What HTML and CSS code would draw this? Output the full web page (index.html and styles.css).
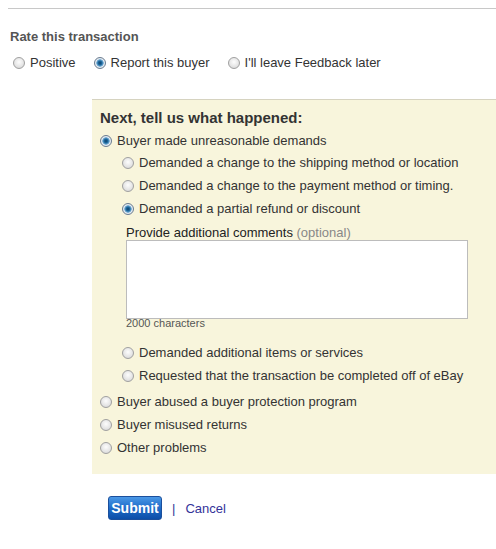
FILE: index.html
```html
<!DOCTYPE html>
<html lang="en">
<head>
  <meta charset="UTF-8">
  <title>Leave Feedback</title>
  <link rel="stylesheet" href="styles.css">
</head>
<body>
  <div class="rule"></div>

  <div class="rate">
    <h3>Rate this transaction</h3>
    <div class="rate-options">
      <label class="opt"><input type="radio" name="rate"> Positive</label>
      <label class="opt"><input type="radio" name="rate" checked> Report this buyer</label>
      <label class="opt"><input type="radio" name="rate"> I'll leave Feedback later</label>
    </div>
  </div>

  <div class="panel">
    <h2>Next, tell us what happened:</h2>
    <label class="opt row"><input type="radio" name="reason" checked> Buyer made unreasonable demands</label>
    <div class="sub">
      <label class="opt row"><input type="radio" name="demand"> Demanded a change to the shipping method or location</label>
      <label class="opt row"><input type="radio" name="demand"> Demanded a change to the payment method or timing.</label>
      <label class="opt row"><input type="radio" name="demand" checked> Demanded a partial refund or discount</label>
      <div class="comments">
        <div class="comments-label">Provide additional comments <span class="muted">(optional)</span></div>
        <textarea></textarea>
        <div class="count">2000 characters</div>
      </div>
      <label class="opt row"><input type="radio" name="demand"> Demanded additional items or services</label>
      <label class="opt row"><input type="radio" name="demand"> Requested that the transaction be completed off of eBay</label>
    </div>
    <label class="opt row"><input type="radio" name="reason"> Buyer abused a buyer protection program</label>
    <label class="opt row"><input type="radio" name="reason"> Buyer misused returns</label>
    <label class="opt row"><input type="radio" name="reason"> Other problems</label>
  </div>

  <div class="actions">
    <button class="submit">Submit</button>
    <span class="sep">|</span>
    <a href="#cancel" class="cancel">Cancel</a>
  </div>
</body>
</html>
```

FILE: styles.css
```css
body {
  font-family: "Liberation Sans", Arial, sans-serif;
  font-size: 13px;
  color: #333;
  margin: 0;
  background: #fff;
}

.rule {
  margin: 8px 0 0 8px;
  border-top: 1px solid #c8c8c8;
}

.rate {
  padding-left: 10px;
}

.rate h3 {
  margin: 20px 0 0;
  font-size: 13px;
  line-height: 16px;
  color: #555;
}

.rate-options {
  display: flex;
  gap: 18px;
  margin-top: 10px;
  padding-left: 3px;
}

.opt {
  display: flex;
  align-items: center;
  gap: 4px;
  line-height: 16px;
}

/* radio drawn by hand to look like the classic windows one */
.opt input {
  appearance: none;
  -webkit-appearance: none;
  margin: 0 1px 0 0;
  width: 12px;
  height: 12px;
  border-radius: 50%;
  border: 1px solid #a0a0a0;
  background: radial-gradient(circle at 50% 40%, #fdfdfd 0, #e4e4e4 60%, #cfcfcf 100%);
  flex: none;
}

.opt input:checked {
  border-color: #6a7c90;
  background: radial-gradient(circle, #0d3f68 0, #1d6aa0 2px, #7fb3d8 3.5px, #e8eef4 4px, #d4dbe2 100%);
}

.panel {
  margin: 28px 0 0 92px;
  background: #f8f5dc;
  border-top: 1px solid #d6d3c0;
  padding: 9px 8px 15px 8px;
}

.panel h2 {
  margin: 0 0 3px;
  font-size: 15px;
  line-height: 17px;
  color: #333;
}

.row {
  height: 23px;
}

.sub {
  padding-left: 22px;
  margin: -1px 0 3px;
}

.comments {
  padding-left: 4px;
  margin: 5px 0 11px;
}

.comments-label {
  line-height: 15px;
  color: #222;
}

.muted {
  color: #888;
}

.comments textarea {
  display: block;
  box-sizing: border-box;
  width: 342px;
  height: 79px;
  margin: 0;
  border: 1px solid #bcbcbc;
  background: #fff;
  resize: none;
}

.count {
  font-size: 11px;
  line-height: 13px;
  margin-top: -2px;
  color: #555;
}

.actions {
  display: flex;
  align-items: center;
  gap: 10px;
  margin: 22px 0 0 108px;
}

.submit {
  font-family: inherit;
  font-size: 14px;
  font-weight: bold;
  color: #fff;
  width: 54px;
  height: 24px;
  padding: 0;
  border: 1px solid #1b4f9c;
  border-radius: 3px;
  background: linear-gradient(#4a98e6, #1f6cc9 50%, #0c4ea8);
}

.sep {
  color: #333399;
}

.cancel {
  color: #333399;
  text-decoration: none;
}
```
